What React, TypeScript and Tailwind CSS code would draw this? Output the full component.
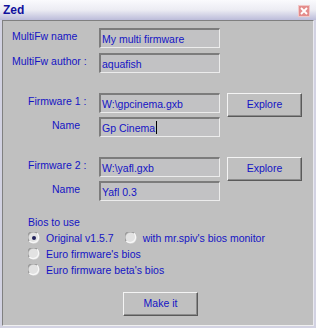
import React from "react";

const font = { fontFamily: '"Liberation Sans", Arial, sans-serif' };

const Field = ({ value, caret }: { value: string; caret?: boolean }) => (
  <div className="flex h-[20px] w-[121px] items-center border-t-2 border-l-2 border-b border-r border-t-[#7c7c7c] border-l-[#7c7c7c] border-b-[#ececec] border-r-[#ececec] bg-[#c2c2c4] pl-[1px] text-[10.5px] leading-[14px] text-[#1414c4]">
    <span>{value}</span>
    {caret && <span className="ml-[1px] h-[13px] w-px bg-black" />}
  </div>
);

const Button = ({ label }: { label: string }) => (
  <div className="flex h-[24px] w-[75px] items-center justify-center border border-t-[#f4f4f4] border-l-[#f4f4f4] border-b-[#5a5a5a] border-r-[#5a5a5a] bg-[#c0c0c0] text-[10.5px] text-[#1414c4] shadow-[inset_-1px_-1px_0_#8c8c8c]">
    {label}
  </div>
);

const Radio = ({ checked }: { checked?: boolean }) => (
  <svg width="12" height="12" viewBox="0 0 12 12" className="shrink-0">
    <circle cx="6" cy="6" r="5.5" fill="#e2e2e2" />
    <path d="M1.2 9 A5.3 5.3 0 0 1 9 1.2" fill="none" stroke="#9a9a9a" strokeWidth="1.2" />
    <path d="M9 1.2 A5.3 5.3 0 0 1 1.2 9" fill="none" stroke="#f8f8f8" strokeWidth="1.2" />
    {checked && <circle cx="6" cy="6" r="2" fill="#20205a" />}
  </svg>
);

const Row = ({ label, indent, children }: { label: string; indent: string; children: React.ReactNode }) => (
  <div className="flex items-start">
    <div className={`w-[96px] pt-[1px] text-[10.5px] leading-[14px] text-[#1414c4] ${indent}`}>{label}</div>
    {children}
  </div>
);

export default function App() {
  return (
    <div style={font} className="flex h-[328px] w-[316px] flex-col bg-[#d2d2e2] px-[2px] pb-[2px]">
      <div className="flex h-[20px] shrink-0 items-start justify-between bg-gradient-to-b from-[#fafafd] via-[#ececf3] to-[#bcbcda] -mx-[2px] pl-[3px] pr-[6px]">
        <span className="pt-[3px] text-[12px] font-bold leading-[14px] text-[#10109c]">Zed</span>
        <div className="mt-[5px] flex h-[12px] w-[12px] items-center justify-center border border-[#f0c8c8] bg-[#e48c8c]">
          <svg width="8" height="8" viewBox="0 0 8 8">
            <path d="M1 1 L7 7 M7 1 L1 7" stroke="white" strokeWidth="1.8" />
          </svg>
        </div>
      </div>
      <div className="flex flex-1 flex-col border-t border-l border-b border-r border-t-[#808080] border-l-[#808080] border-b-[#f0f0f0] border-r-[#eaeaf0] bg-[#c0c0c0] pt-[7px]">
        <Row label="MultiFw name" indent="pl-[9px]">
          <Field value="My multi firmware" />
        </Row>
        <div className="mt-[5px]">
          <Row label="MultiFw author :" indent="pl-[9px]">
            <Field value="aquafish" />
          </Row>
        </div>
        <div className="mt-[20px]">
          <Row label="Firmware 1 :" indent="pl-[25px]">
            <Field value="W:\gpcinema.gxb" />
            <div className="ml-[7px]">
              <Button label="Explore" />
            </div>
          </Row>
        </div>
        <Row label="Name" indent="pl-[49px]">
          <Field value="Gp Cinema" caret />
        </Row>
        <div className="mt-[20px]">
          <Row label="Firmware 2 :" indent="pl-[25px]">
            <Field value="W:\yafl.gxb" />
            <div className="ml-[7px]">
              <Button label="Explore" />
            </div>
          </Row>
        </div>
        <Row label="Name" indent="pl-[49px]">
          <Field value="Yafl 0.3" />
        </Row>
        <div className="mt-[13px] pl-[25px] text-[10.5px] leading-[16px] text-[#1414c4]">
          <div>Bios to use</div>
          <div className="flex items-center">
            <Radio checked />
            <span className="ml-[6px]">Original v1.5.7</span>
            <div className="ml-[11px]">
              <Radio />
            </div>
            <span className="ml-[6px]">with mr.spiv's bios monitor</span>
          </div>
          <div className="flex items-center">
            <Radio />
            <span className="ml-[6px]">Euro firmware's bios</span>
          </div>
          <div className="flex items-center">
            <Radio />
            <span className="ml-[6px]">Euro firmware beta's bios</span>
          </div>
        </div>
        <div className="mt-[14px] pl-[120px]">
          <Button label="Make it" />
        </div>
      </div>
    </div>
  );
}
